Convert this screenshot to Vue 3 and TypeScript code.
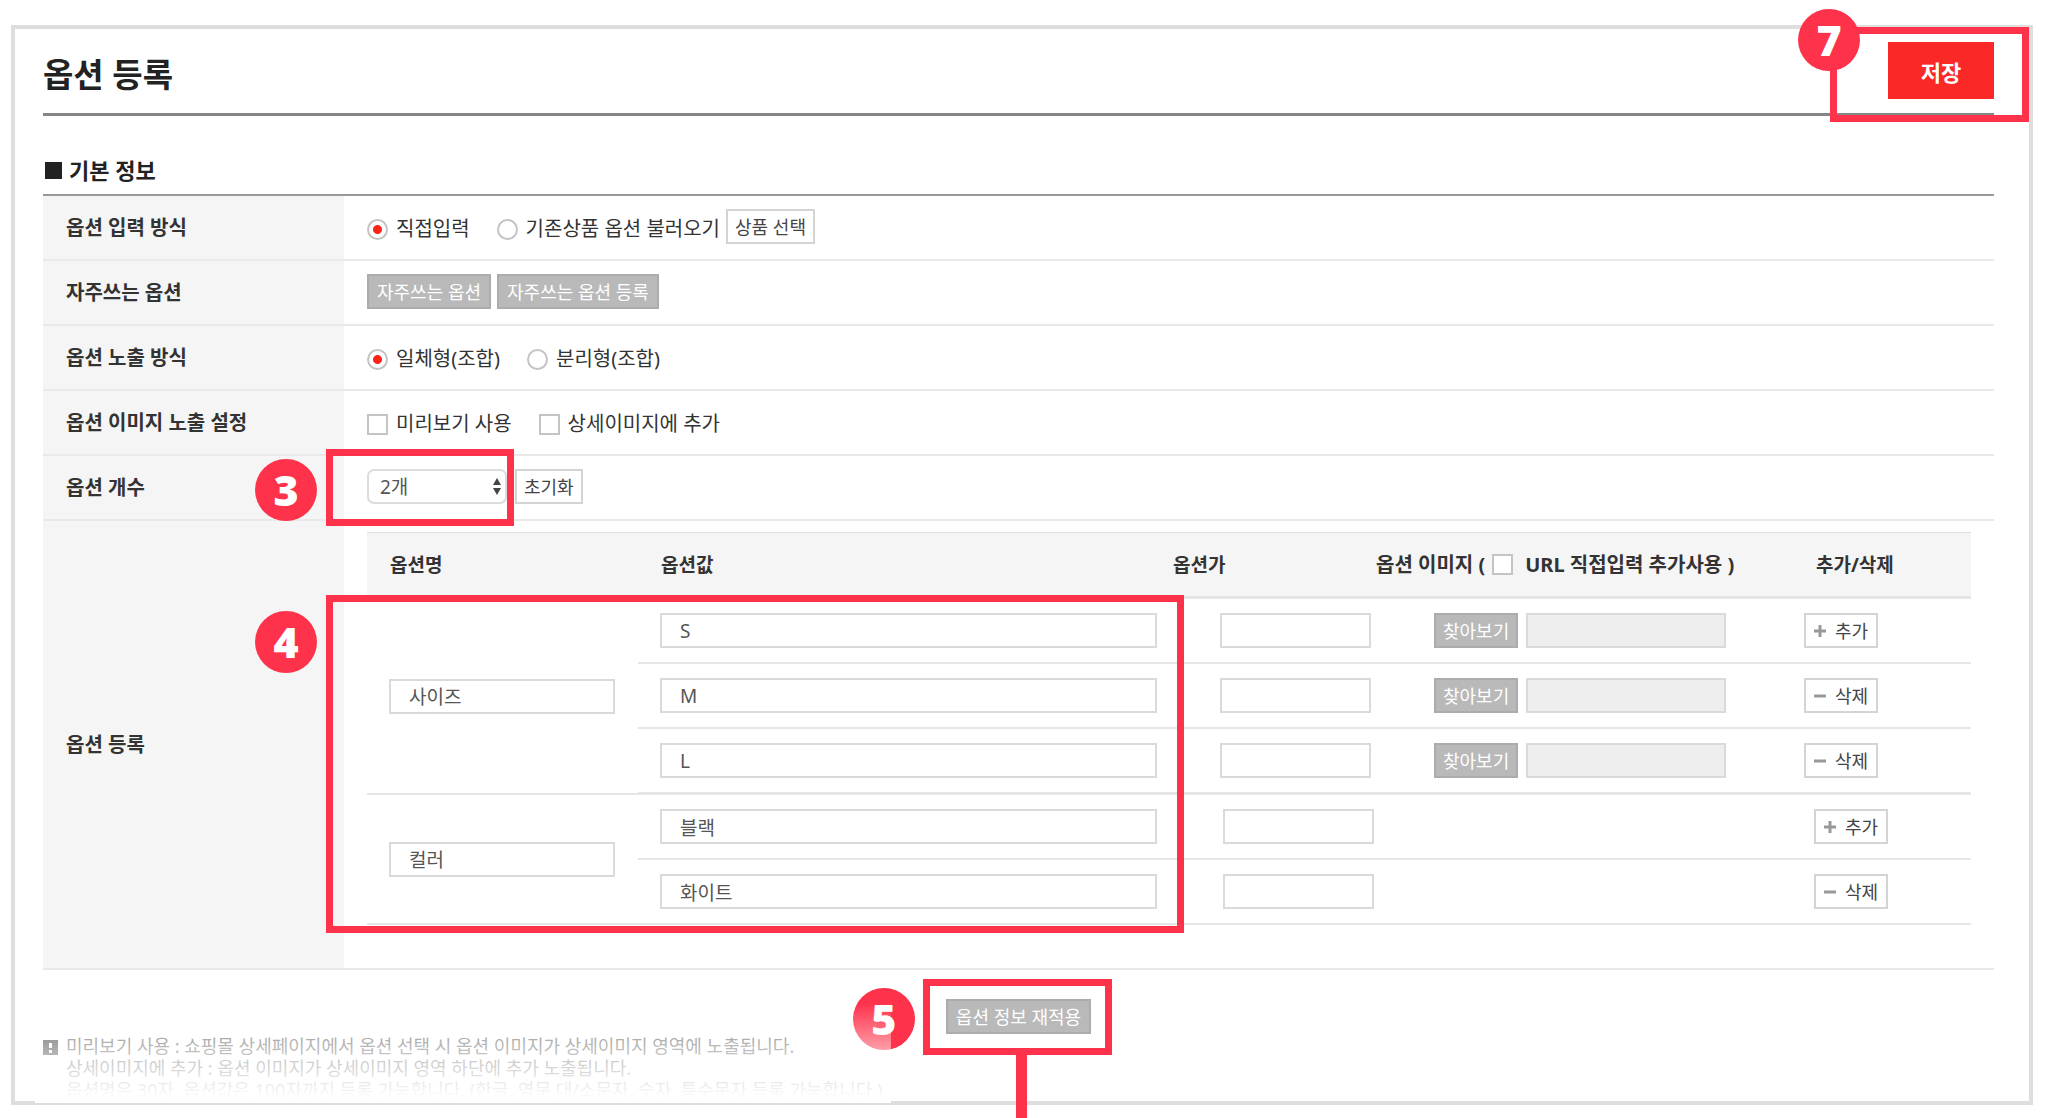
<script setup lang="ts">
import { reactive, ref } from 'vue'

interface OptionGroup {
  id: string
  name: string
  hasImage: boolean
  values: string[]
}

const inputMode = ref('direct')
const displayMode = ref('combined')
const usePreview = ref(false)
const addToDetail = ref(false)
const useUrl = ref(false)
const optionCount = ref('2')

const groups = reactive<OptionGroup[]>([
  { id: 'size', name: '사이즈', hasImage: true, values: ['S', 'M', 'L'] },
  { id: 'color', name: '컬러', hasImage: false, values: ['블랙', '화이트'] },
])
</script>

<template>
  <main class="card">
    <header class="page-head">
      <h1>옵션 등록</h1>
      <button type="button" class="save">저장</button>
      <span class="frame frame-save"></span>
      <span class="badge badge-save">7</span>
    </header>

    <h2><span class="square"></span>기본 정보</h2>

    <form class="form" @submit.prevent>
      <div class="row">
        <div class="row-label">옵션 입력 방식</div>
        <div class="row-body">
          <label class="choice"><input v-model="inputMode" type="radio" name="mode" value="direct" />직접입력</label>
          <label class="choice choice-tight"><input v-model="inputMode" type="radio" name="mode" value="load" />기존상품 옵션 불러오기</label>
          <button type="button" class="btn">상품 선택</button>
        </div>
      </div>

      <div class="row">
        <div class="row-label">자주쓰는 옵션</div>
        <div class="row-body">
          <button type="button" class="btn btn-grey btn-first">자주쓰는 옵션</button>
          <button type="button" class="btn btn-grey">자주쓰는 옵션 등록</button>
        </div>
      </div>

      <div class="row">
        <div class="row-label">옵션 노출 방식</div>
        <div class="row-body">
          <label class="choice"><input v-model="displayMode" type="radio" name="display" value="combined" />일체형(조합)</label>
          <label class="choice"><input v-model="displayMode" type="radio" name="display" value="split" />분리형(조합)</label>
        </div>
      </div>

      <div class="row">
        <div class="row-label">옵션 이미지 노출 설정</div>
        <div class="row-body">
          <label class="choice"><input v-model="usePreview" type="checkbox" />미리보기 사용</label>
          <label class="choice"><input v-model="addToDetail" type="checkbox" />상세이미지에 추가</label>
        </div>
      </div>

      <div class="row">
        <label class="row-label" for="option-count">옵션 개수</label>
        <div class="row-body">
          <span class="select-wrap">
            <select id="option-count" v-model="optionCount">
              <option value="1">1개</option>
              <option value="2">2개</option>
              <option value="3">3개</option>
            </select>
            <svg class="arrows" width="10" height="18" viewBox="0 0 10 18" aria-hidden="true">
              <path d="M5 1 9 8H1zM5 18 1 11h8z" fill="#444" />
            </svg>
          </span>
          <button type="button" class="btn">초기화</button>
          <span class="frame frame-count"></span>
          <span class="badge badge-count">3</span>
        </div>
      </div>

      <div class="row">
        <div class="row-label">옵션 등록</div>
        <div class="row-body row-body-table">
          <table>
            <colgroup>
              <col class="col-name" />
              <col />
              <col class="col-price" />
              <col class="col-image" />
              <col class="col-action" />
            </colgroup>
            <thead>
              <tr>
                <th scope="col">옵션명</th>
                <th scope="col">옵션값</th>
                <th scope="col" class="flush">옵션가</th>
                <th scope="col" class="flush">
                  <label class="url-choice">옵션 이미지 ( <input v-model="useUrl" type="checkbox" /> URL 직접입력 추가사용 )</label>
                </th>
                <th scope="col" class="th-action">추가/삭제</th>
              </tr>
            </thead>
            <tbody v-for="group in groups" :key="group.id" :class="{ plain: !group.hasImage }">
              <tr v-for="(value, i) in group.values" :key="i">
                <td v-if="i === 0" class="td-name" :rowspan="group.values.length">
                  <input v-model="group.name" class="field" type="text" aria-label="옵션명" />
                </td>
                <td class="td-value">
                  <input v-model="group.values[i]" class="field" type="text" aria-label="옵션값" />
                </td>
                <td class="td-price"><input class="field" type="text" aria-label="옵션가" /></td>
                <td class="td-image">
                  <div v-if="group.hasImage" class="file">
                    <button type="button" class="btn btn-grey">찾아보기</button>
                    <input class="field" type="text" disabled aria-label="옵션 이미지" />
                  </div>
                </td>
                <td class="td-action">
                  <button type="button" class="btn btn-icon">
                    <svg width="12" height="12" viewBox="0 0 12 12" aria-hidden="true">
                      <path :d="i === 0 ? 'M0 6h12M6 0v12' : 'M0 6h12'" stroke="#999" stroke-width="3" fill="none" />
                    </svg>
                    {{ i === 0 ? '추가' : '삭제' }}
                  </button>
                </td>
              </tr>
            </tbody>
          </table>
          <span class="frame frame-options"></span>
          <span class="badge badge-options">4</span>
        </div>
      </div>
    </form>

    <div class="apply">
      <span class="apply-box">
        <button type="button" class="btn btn-grey">옵션 정보 재적용</button>
        <span class="frame frame-apply"></span>
        <span class="connector"></span>
        <span class="badge badge-apply">5</span>
      </span>
    </div>

    <div class="notes">
      <svg class="notice" width="15" height="15" viewBox="0 0 15 15" aria-hidden="true">
        <path d="M0 0h15v15H0z" fill="#555" />
        <path d="M6 3h3v5H6zM6 10h3v3H6z" fill="#fff" />
      </svg>
      <p>미리보기 사용 : 쇼핑몰 상세페이지에서 옵션 선택 시 옵션 이미지가 상세이미지 영역에 노출됩니다.</p>
      <p>상세이미지에 추가 : 옵션 이미지가 상세이미지 영역 하단에 추가 노출됩니다.</p>
      <p>옵션명은 30자, 옵션값은 100자까지 등록 가능합니다. (한글, 영문 대/소문자, 숫자, 특수문자 등록 가능합니다.)</p>
    </div>
    <div class="fade"></div>
  </main>
</template>

<style>
body {
  background: #fff;
}
</style>

<style scoped>
* {
  box-sizing: border-box;
}

.card,
.card button,
.card input,
.card select {
  font-family: 'Noto Sans', 'Noto Sans CJK KR', sans-serif;
}

.card {
  position: relative;
  margin: 25px 15px 13px 11px;
  padding: 0 35px 0 28px;
  border: 4px solid #dedede;
  color: #333;
  font-size: 20px;
  line-height: 28px;
}

.page-head {
  position: relative;
  display: flex;
  align-items: center;
  justify-content: space-between;
  padding: 13px 0 14px;
  border-bottom: 3px solid #868686;
}

h1 {
  margin: 0;
  padding-top: 8px;
  color: #222;
  font-size: 33px;
  font-weight: 700;
  line-height: 40px;
}

.save {
  width: 106px;
  height: 57px;
  padding: 0;
  border: 0;
  background: #fb2828;
  color: #fff;
  font-size: 22px;
  font-weight: 700;
}

h2 {
  display: flex;
  align-items: center;
  gap: 7px;
  margin: 0;
  padding: 38px 0 8px 2px;
  border-bottom: 2px solid #999;
  color: #222;
  font-size: 22px;
  font-weight: 700;
  line-height: 32px;
}

.square {
  width: 17px;
  height: 17px;
  background: #222;
}

.row {
  display: grid;
  grid-template-columns: 301px minmax(0, 1fr);
  border-bottom: 2px solid #e9e9e9;
}

.row-label {
  display: flex;
  align-items: center;
  padding-left: 23px;
  background: #f5f5f5;
  font-weight: 700;
}

.row-body {
  position: relative;
  display: flex;
  align-items: center;
  min-height: 63px;
  padding: 0 23px 2px;
}

.row-body-table {
  display: block;
  padding: 11px 23px 43px;
}

.choice {
  display: flex;
  align-items: center;
  gap: 8px;
  margin-right: 27px;
  padding-top: 5px;
}

.choice-tight {
  margin-right: 6px;
}

input[type='radio'],
input[type='checkbox'] {
  flex: none;
  width: 21px;
  height: 21px;
  margin: 0;
  border: 2px solid #c4c4c4;
  background: #fff;
  appearance: none;
}

input[type='radio'] {
  border-radius: 50%;
}

input[type='radio']:checked {
  background: radial-gradient(circle, #fb2418 4px, #fff 5px);
}

.btn {
  height: 35px;
  padding: 0 7px;
  border: 2px solid #d4d4d4;
  background: #fff;
  color: #444;
  font-size: 18px;
  line-height: 28px;
  white-space: nowrap;
}

.btn-grey {
  padding: 0 8px;
  border-color: #acacac;
  background: #b9b9b9;
  color: #fff;
}

.btn-first {
  margin-right: 6px;
}

.select-wrap {
  position: relative;
  margin-right: 8px;
}

select {
  display: block;
  width: 140px;
  height: 35px;
  padding: 0 11px;
  border: 2px solid #dcdcdc;
  border-radius: 7px;
  background: #fff;
  color: #555;
  font-size: 19px;
  appearance: none;
}

.arrows {
  position: absolute;
  top: 8px;
  right: 5px;
  pointer-events: none;
}

table {
  width: 100%;
  border-spacing: 0;
  table-layout: fixed;
}

.col-name {
  width: 271px;
}

.col-price {
  width: 203px;
}

.col-image {
  width: 428px;
}

.col-action {
  width: 167px;
}

th {
  height: 67px;
  padding: 0 0 0 23px;
  border-top: 1px solid #dedede;
  border-bottom: 3px solid #e4e4e4;
  background: #f5f5f5;
  font-size: 19px;
  font-weight: 700;
  text-align: left;
  white-space: nowrap;
}

.flush {
  padding-left: 0;
}

.th-action {
  padding-left: 12px;
}

.url-choice {
  display: flex;
  align-items: center;
  gap: 7px;
  font-size: 20px;
}

.url-choice input {
  margin-right: 5px;
}

td {
  height: 65px;
  padding: 0;
  border-bottom: 2px solid #e6e6e6;
}

tbody:nth-of-type(1) tr:last-child td {
  height: 66px;
  border-bottom-width: 3px;
}

.td-name,
.td-value {
  padding: 0 23px 0 22px;
}

.td-value {
  padding-right: 16px;
}

.td-price {
  padding-left: 47px;
}

.plain .td-price {
  padding-left: 50px;
}

.td-image {
  padding-left: 58px;
}

.plain .td-action {
  padding-left: 10px;
}

.field {
  display: block;
  width: 100%;
  height: 35px;
  padding: 0 18px;
  border: 2px solid #dadada;
  background: #fff;
  color: #555;
  font-size: 19px;
}

.td-price .field {
  width: 151px;
}

.file {
  display: flex;
  gap: 8px;
}

.file .btn {
  padding: 0 7px;
}

.file .field {
  width: 200px;
  background: #eee;
}

.btn-icon {
  display: flex;
  align-items: center;
  gap: 9px;
  padding: 0 8px;
}

.apply {
  display: flex;
  justify-content: center;
  padding-top: 29px;
}

.apply-box {
  position: relative;
  display: flex;
}

.notes {
  position: relative;
  padding: 1px 0 0 23px;
  color: #777;
  font-size: 18px;
  line-height: 22px;
}

.notes p {
  margin: 0;
}

.notice {
  position: absolute;
  top: 6px;
  left: 0;
}

.fade {
  position: absolute;
  bottom: -2px;
  left: 20px;
  width: 856px;
  height: 100px;
  background: linear-gradient(to bottom, rgba(255, 255, 255, 0), rgba(255, 255, 255, 0.5) 45%, #fff 96%);
  pointer-events: none;
}

/* Step markers laid over the form */
.frame {
  position: absolute;
  border: 7px solid #fe324b;
  pointer-events: none;
}

.badge {
  position: absolute;
  width: 62px;
  height: 62px;
  border-radius: 50%;
  background: #fe324b;
  color: #fff;
  font-family: 'Open Sans', sans-serif;
  font-size: 43px;
  font-weight: 800;
  line-height: 61px;
  text-align: center;
}

.frame-save {
  top: -2px;
  right: -35px;
  width: 199px;
  height: 95px;
}

.badge-save {
  top: -20px;
  right: 134px;
}

.frame-count {
  top: -7px;
  left: -18px;
  width: 188px;
  height: 77px;
}

.badge-count {
  top: 3px;
  left: -89px;
}

.frame-options {
  top: 74px;
  right: 810px;
  bottom: 35px;
  left: -18px;
}

.badge-options {
  top: 90px;
  left: -89px;
}

.frame-apply {
  inset: -20px -21px -21px -23px;
}

.connector {
  position: absolute;
  top: 55px;
  left: 70px;
  width: 11px;
  height: 64px;
  background: #fe324b;
}

.badge-apply {
  top: -11px;
  left: -93px;
}
</style>
